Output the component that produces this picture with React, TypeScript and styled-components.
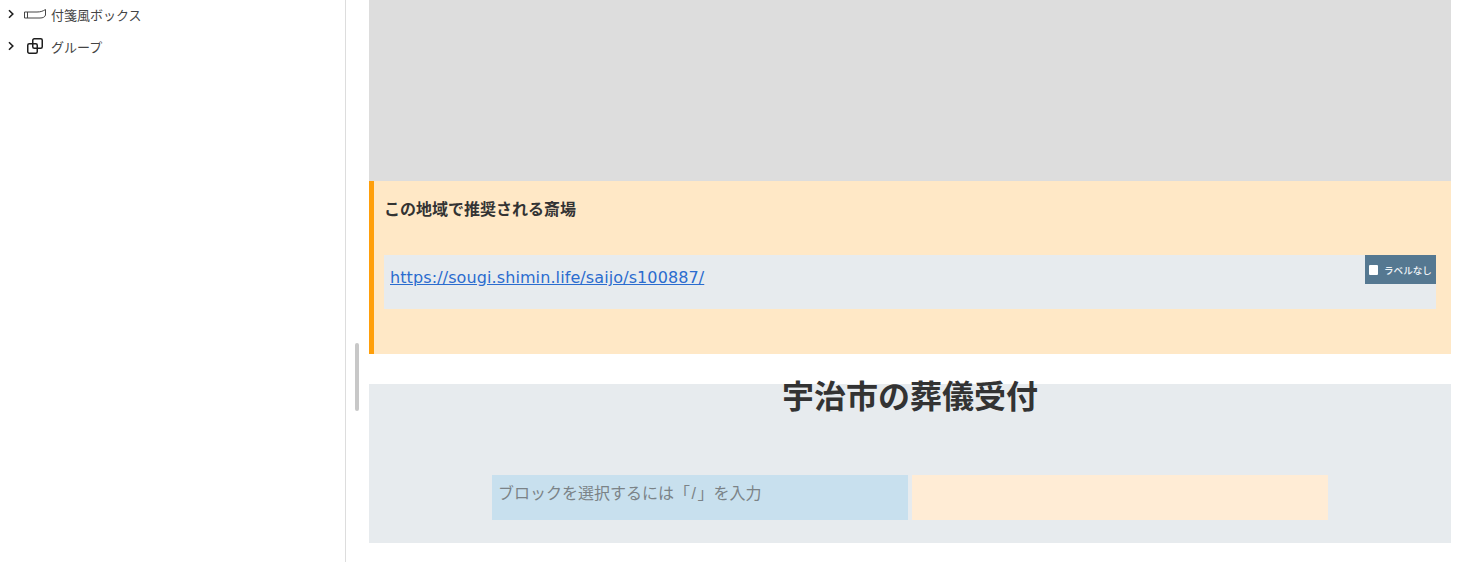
import React from "react";
import styled, { createGlobalStyle } from "styled-components";

const GlobalStyle = createGlobalStyle`
  html, body {
    margin: 0;
    padding: 0;
    height: 100%;
    overflow: hidden;
    background: #fff;
    font-family: "Liberation Sans", "Noto Sans CJK JP", sans-serif;
    color: #333;
  }
`;

function Chevron() {
  return (
    <ChevronSvg viewBox="0 0 8 10" width="8" height="10">
      <path d="M2 1.200 L5.800 5 L2 8.800" fill="none" stroke="#1e1e1e" strokeWidth="1.600" />
    </ChevronSvg>
  );
}

function StickyIcon() {
  return (
    <svg viewBox="0 0 22 10" width="22" height="10">
      <path d="M.5 3 H13 C17 3 19 2 21.500 .5 V6 C21 8 19 9 16 9 H.5 Z" fill="none" stroke="#444" strokeWidth="1" />
      <path d="M3.500 3 V9" fill="none" stroke="#444" strokeWidth="1" />
    </svg>
  );
}

function GroupIcon() {
  return (
    <svg viewBox="0 0 18 18" width="18" height="18">
      <rect x="6.750" y="1.750" width="9.500" height="9.500" rx="1.500" fill="none" stroke="#1e1e1e" strokeWidth="1.500" />
      <rect x="1.750" y="6.750" width="9.500" height="9.500" rx="1.500" fill="none" stroke="#1e1e1e" strokeWidth="1.500" />
    </svg>
  );
}

export default function App() {
  return (
    <>
      <GlobalStyle />
      <Page>
        <Sidebar>
          <TreeList>
            <TreeRow>
              <Chevron />
              <IconSlot>
                <StickyIcon />
              </IconSlot>
              <TreeLabel>付箋風ボックス</TreeLabel>
            </TreeRow>
            <TreeRow>
              <Chevron />
              <IconSlot>
                <GroupIcon />
              </IconSlot>
              <TreeLabel>グループ</TreeLabel>
            </TreeRow>
          </TreeList>
        </Sidebar>
        <ScrollThumb />
        <Editor>
          <GrayBlock />
          <Notice>
            <NoticeTitle>この地域で推奨される斎場</NoticeTitle>
            <LinkBox>
              <UrlLink href="#">https://sougi.shimin.life/saijo/s100887/</UrlLink>
              <LabelBadge>
                <BadgeCheck />
                <span>ラベルなし</span>
              </LabelBadge>
            </LinkBox>
          </Notice>
          <Section>
            <SectionTitle>宇治市の葬儀受付</SectionTitle>
            <Columns>
              <Column $bg="#c8e0ee">
                <Placeholder>
                  ブロックを選択するには「<Slash>/</Slash>」を入力
                </Placeholder>
              </Column>
              <Column $bg="#ffecd5" />
            </Columns>
          </Section>
        </Editor>
      </Page>
    </>
  );
}

const Page = styled.div`
  position: relative;
  display: flex;
  width: 1457px;
  height: 562px;
  overflow: hidden;
  background: #fff;
`;

const Sidebar = styled.aside`
  flex: none;
  box-sizing: border-box;
  width: 346px;
  height: 100%;
  border-right: 1px solid #ddd;
`;

const TreeList = styled.div`
  margin-top: -2px;
`;

const TreeRow = styled.div`
  display: flex;
  align-items: center;
  height: 32px;
  padding-left: 7px;
`;

const ChevronSvg = styled.svg`
  flex: none;
`;

const IconSlot = styled.span`
  display: flex;
  flex: none;
  align-items: center;
  justify-content: center;
  width: 24px;
  margin-left: 8px;
`;

const TreeLabel = styled.span`
  margin-left: 4px;
  font-size: 13px;
  color: #444;
`;

const ScrollThumb = styled.div`
  position: absolute;
  left: 355px;
  top: 343px;
  width: 4px;
  height: 68px;
  border-radius: 2px;
  background: #c8c8c8;
`;

const Editor = styled.main`
  flex: none;
  width: 1082px;
  margin-left: 23px;
`;

const GrayBlock = styled.div`
  height: 181px;
  background: #ddd;
`;

const Notice = styled.section`
  box-sizing: border-box;
  height: 173px;
  padding: 19px 15px 0 10px;
  border-left: 5px solid #ff9f0a;
  background: #ffe8c6;
`;

const NoticeTitle = styled.div`
  font-size: 16px;
  font-weight: 700;
  line-height: 20px;
  color: #333;
`;

const LinkBox = styled.div`
  position: relative;
  box-sizing: border-box;
  height: 54px;
  margin-top: 35px;
  padding: 12px 6px 0;
  background: #e7ebee;
`;

const UrlLink = styled.a`
  font-family: "DejaVu Sans", "Noto Sans CJK JP", sans-serif;
  font-size: 16px;
  line-height: 22px;
  letter-spacing: 0.1px;
  color: #2b6ccf;
  text-decoration: underline;
`;

const LabelBadge = styled.div`
  position: absolute;
  top: 0;
  right: 0;
  display: flex;
  align-items: center;
  gap: 6px;
  box-sizing: border-box;
  width: 71px;
  height: 29px;
  padding-left: 4px;
  background: #557891;
  font-size: 9.600px;
  font-weight: 500;
  color: #eef3f6;
  white-space: nowrap;
`;

const BadgeCheck = styled.span`
  flex: none;
  width: 9px;
  height: 10px;
  border-radius: 1px;
  background: #fff;
`;

const Section = styled.section`
  box-sizing: border-box;
  height: 159px;
  margin-top: 30px;
  background: #e7ebee;
`;

const SectionTitle = styled.h2`
  margin: 0;
  font-size: 32px;
  font-weight: 700;
  line-height: 26px;
  text-align: center;
  color: #333;
`;

const Columns = styled.div`
  display: flex;
  gap: 4px;
  justify-content: center;
  margin-top: 65px;
`;

const Column = styled.div<{ $bg: string }>`
  box-sizing: border-box;
  width: 416px;
  height: 45px;
  padding: 8px 6px 0;
  background: ${(p) => p.$bg};
`;

const Placeholder = styled.span`
  font-size: 16px;
  line-height: 22px;
  color: #7b8387;
`;

const Slash = styled.span`
  margin: 0 1.500px;
`;
